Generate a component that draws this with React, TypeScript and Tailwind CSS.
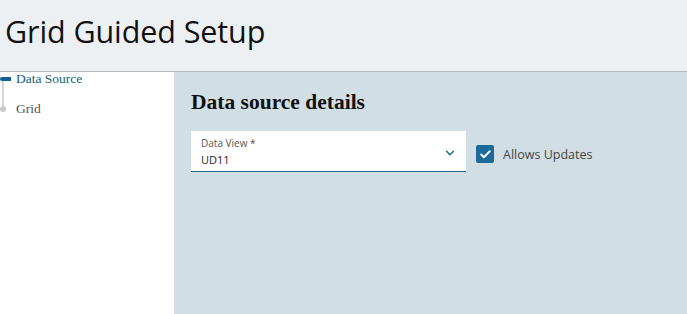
import { ChevronDown, Check } from "lucide-react";

const steps = [
  { label: "Data Source", active: true },
  { label: "Grid", active: false },
];

export default function App() {
  return (
    <div className="flex h-[314px] w-[687px] flex-col overflow-hidden bg-white font-['Open_Sans',sans-serif]">
      <header className="h-[72px] shrink-0 border-b border-[#b4b8bc] bg-[#edf0f3] pl-[5px] pt-[9px]">
        <h1 className="text-[30.5px] leading-[44px] tracking-[-0.1px] text-[#111]">
          Grid Guided Setup
        </h1>
      </header>

      <div className="flex flex-1">
        <nav className="relative w-[174px] shrink-0 bg-white">
          <div className="absolute left-[2px] top-[8px] h-[30px] w-[2px] bg-[#d6d6d6]" />
          <ul className="relative -mt-[3px] font-['Liberation_Serif',serif] text-[13.5px]">
            {steps.map((step) => (
              <li key={step.label} className="flex h-[30px] items-start">
                {step.active ? (
                  <span className="mt-[8px] h-[4px] w-[11px] rounded-l-full rounded-r-[3px] bg-[#0f6196]" />
                ) : (
                  <span className="mt-[7px] h-[6px] w-[6px] rounded-full bg-[#c9c9c9]" />
                )}
                <span
                  className={
                    step.active
                      ? "ml-[5px] text-[#135f7f]"
                      : "ml-[10px] text-[#555]"
                  }
                >
                  {step.label}
                </span>
              </li>
            ))}
          </ul>
        </nav>

        <main className="flex-1 bg-[#d1dee3] pl-[17px] pt-[17px]">
          <h2 className="font-['Liberation_Serif',serif] text-[21.5px] font-bold leading-[26px] text-[#111]">
            Data source details
          </h2>
          <div className="mt-[16px] flex items-center gap-[10px]">
            <div className="flex h-[41px] w-[275px] items-center justify-between border-b-[1.5px] border-[#24628c] bg-white pl-[10px] pr-[9px]">
              <div className="flex flex-col pt-[2px]">
                <span className="text-[10px] leading-[14px] text-[#555]">
                  Data View *
                </span>
                <span className="mt-[2px] text-[11px] leading-[16px] text-[#222]">
                  UD11
                </span>
              </div>
              <ChevronDown className="mt-[4px] h-[14px] w-[14px] text-[#1f6b9a]" strokeWidth={2.5} />
            </div>
            <label className="mt-[5px] flex items-center gap-[9px]">
              <span className="flex h-[18px] w-[18px] items-center justify-center rounded-[2px] bg-[#1b6a98]">
                <Check className="h-[13px] w-[13px] text-white" strokeWidth={3.5} />
              </span>
              <span className="pt-[2px] text-[12.5px] text-[#454545]">Allows Updates</span>
            </label>
          </div>
        </main>
      </div>
    </div>
  );
}
